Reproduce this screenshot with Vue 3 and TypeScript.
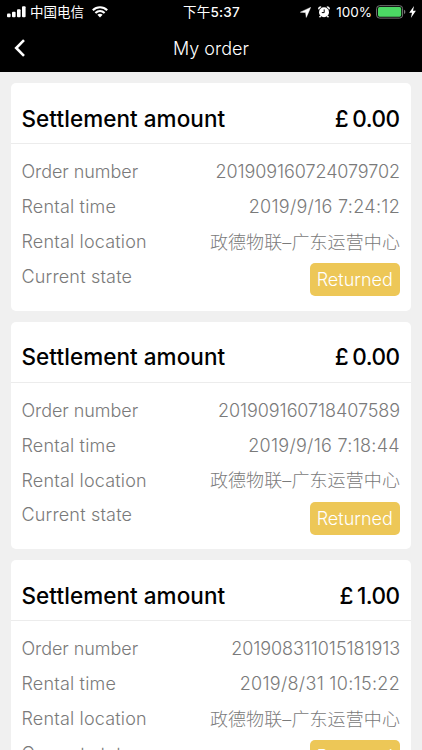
<script setup lang="ts">
interface Order {
  amount: string
  number: string
  time: string
  location: string
  state: string
}

const place = '政德物联–广东运营中心'

const orders: Order[] = [
  { amount: '0.00', number: '201909160724079702', time: '2019/9/16 7:24:12', location: place, state: 'Returned' },
  { amount: '0.00', number: '201909160718407589', time: '2019/9/16 7:18:44', location: place, state: 'Returned' },
  { amount: '1.00', number: '201908311015181913', time: '2019/8/31 10:15:22', location: place, state: 'Returned' },
]
</script>

<template>
  <div class="screen">
    <header class="top">
      <div class="status">
        <div class="carrier">
          <svg class="signal" width="19" height="12" viewBox="0 0 19 12" fill="#fff">
            <rect x="0" y="7.5" width="3.6" height="3.8" rx="1" />
            <rect x="5" y="5.7" width="3.6" height="5.6" rx="1" />
            <rect x="10" y="3.3" width="3.6" height="8" rx="1" />
            <rect x="15" y="0.2" width="3.6" height="11.1" rx="1" />
          </svg>
          <span class="carrier-name">中国电信</span>
          <svg class="wifi" width="16" height="12" viewBox="0 0 16 12" fill="none" stroke="#fff" stroke-width="2.1">
            <path d="M0.8 4.2C4.9 0.2 11.1 0.2 15.2 4.2" />
            <path d="M3.4 7C6.1 4.4 9.9 4.4 12.6 7" />
            <path d="M8 11.4L5.4 8.8Q8 6.8 10.6 8.8Z" fill="#fff" stroke="none" />
          </svg>
        </div>
        <div class="clock"><span class="period">下午</span>5:37</div>
        <div class="power">
          <svg width="11" height="11" viewBox="0 0 11 11" fill="#fff" stroke="#fff" stroke-width="0.5" stroke-linejoin="round"><path d="M10.6 0.4L6.3 10.4L5.6 5.6L0.4 5.2Z" /></svg>
          <svg class="alarm" width="12" height="12" viewBox="0 0 12 12">
            <circle cx="6" cy="6.2" r="5" fill="#fff" />
            <path d="M0.7 3.4Q0.8 1 3.2 0.9M11.3 3.4Q11.2 1 8.8 0.9M2.7 10L1.5 11.3M9.3 10L10.5 11.3" fill="none" stroke="#fff" stroke-width="1.4" />
            <path d="M6.2 3.4V6.6H3.8" fill="none" stroke="#000" stroke-width="1" />
          </svg>
          <span class="percent">100%</span>
          <svg class="battery" width="30" height="14" viewBox="0 0 30 14">
            <rect x="0.6" y="0.7" width="26" height="12.4" rx="3" fill="none" stroke="#777" stroke-width="1" />
            <rect x="2" y="2.1" width="23.2" height="9.6" rx="1.6" fill="#4cd964" />
            <path d="M28 4.8Q29.4 5.3 29.4 6.9Q29.4 8.5 28 9Z" fill="#777" />
          </svg>
          <svg class="bolt" width="7" height="12" viewBox="0 0 7 12" fill="#fff"><path d="M5 0L0.2 6.8H3L1.9 12L6.9 4.8H4Z" /></svg>
        </div>
      </div>
      <nav class="nav">
        <svg class="back" width="12" height="18" viewBox="0 0 12 18" fill="none" stroke="#fff" stroke-width="2.6"><path d="M10 1.2L2.2 9L10 16.8" /></svg>
        <h1>My order</h1>
      </nav>
    </header>
    <main class="list">
      <article v-for="order in orders" :key="order.number" class="card">
        <div class="card-head">
          <h2>Settlement amount</h2>
          <div class="amount"><span>£</span><span>{{ order.amount }}</span></div>
        </div>
        <dl class="rows">
          <div class="row"><dt class="tight">Order number</dt><dd class="number">{{ order.number }}</dd></div>
          <div class="row"><dt>Rental time</dt><dd class="time">{{ order.time }}</dd></div>
          <div class="row"><dt>Rental location</dt><dd class="location">{{ order.location }}</dd></div>
          <div class="row"><dt>Current state</dt><dd class="badge">{{ order.state }}</dd></div>
        </dl>
      </article>
    </main>
  </div>
</template>

<style>
body {
  background: #f0f0f0;
}
</style>

<style scoped>
.screen {
  height: 750px;
  overflow: hidden;
  background: #f0f0f0;
  font-family: Inter, "Noto Sans CJK SC", sans-serif;
}
h1, h2, dl, dd {
  margin: 0;
}
svg {
  display: block;
  flex: none;
}
.top {
  height: 72px;
  background: #000;
  color: #fff;
}
.status {
  height: 24px;
  display: grid;
  grid-template-columns: 1fr auto 1fr;
  align-items: center;
  padding: 0 6px 0 7px;
  font-size: 13.5px;
  line-height: 24px;
}
.carrier, .power {
  display: flex;
  align-items: center;
}
.carrier-name {
  margin: 0 8px 0 4px;
}
.clock {
  font-weight: 500;
  letter-spacing: 0.2px;
}
.period {
  font-weight: 400;
}
.power {
  justify-content: flex-end;
}
.alarm {
  margin-left: 7px;
}
.percent {
  margin: 0 4px 0 6px;
}
.bolt {
  margin-left: 3px;
}
.nav {
  height: 48px;
  display: grid;
  grid-template-columns: 44px 1fr 44px;
  align-items: center;
}
.back {
  margin-left: 14px;
}
h1 {
  text-align: center;
  font-size: 18px;
  font-weight: 350;
}
.list {
  display: flex;
  flex-direction: column;
  gap: 11px;
  padding: 11px 11px 0;
}
.card {
  height: 227.5px;
  flex: none;
  border-radius: 5px;
  background: #fff;
}
.card-head {
  box-sizing: border-box;
  height: 61px;
  display: flex;
  align-items: center;
  justify-content: space-between;
  padding: 10px 11.5px 0 10.5px;
  border-bottom: 1px solid #ececec;
  color: #000;
}
h2, .amount {
  font-size: 22.5px;
  font-weight: 500;
}
h2 {
  letter-spacing: 0.05px;
}
.amount {
  display: flex;
  gap: 4px;
  letter-spacing: -0.5px;
}
.rows {
  padding: 10.6px 11px 0 10.5px;
  color: #7a7a7a;
  font-size: 18px;
  font-weight: 300;
}
.row {
  height: 34.8px;
  display: flex;
  align-items: center;
  justify-content: space-between;
  white-space: nowrap;
}
dt {
  letter-spacing: 0.18px;
}
.tight {
  letter-spacing: -0.06px;
}
.number {
  letter-spacing: -0.08px;
}
.time {
  letter-spacing: 0.3px;
}
.location {
  letter-spacing: 0.1px;
  margin-top: -2px;
}
.badge {
  box-sizing: border-box;
  width: 90.5px;
  height: 33px;
  margin-top: 7px;
  border-radius: 5px;
  background: #edc757;
  color: #fff;
  line-height: 33.5px;
  text-align: center;
}
</style>
